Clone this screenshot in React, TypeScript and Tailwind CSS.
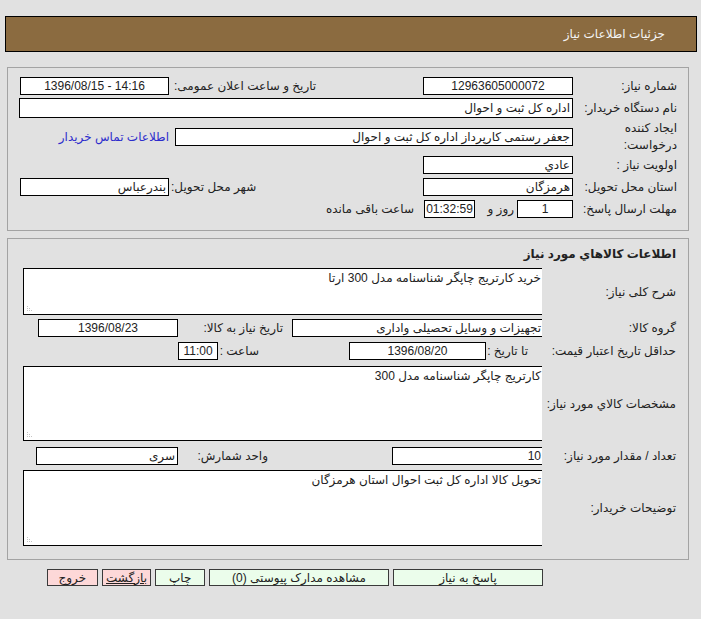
import type { ReactNode } from "react"

// text box with a black frame, as in the old ASP.NET forms
function Field({ className, children }: { className: string; children?: ReactNode }) {
  return (
    <div className={`flex shrink-0 items-center overflow-hidden whitespace-nowrap border-black bg-white leading-none ${className}`}>
      {children}
    </div>
  )
}

function Grip() {
  return (
    <svg className="absolute bottom-[2px] left-[3px]" width="6" height="6" viewBox="0 0 6 6">
      <g fill="#c4c4c4">
        <rect x="0" y="4" width="1" height="1" />
        <rect x="2" y="4" width="1" height="1" />
        <rect x="4" y="4" width="1" height="1" />
        <rect x="0" y="2" width="1" height="1" />
        <rect x="2" y="2" width="1" height="1" />
        <rect x="0" y="0" width="1" height="1" />
      </g>
    </svg>
  )
}

function Area({ h, text }: { h: string; text: string }) {
  return (
    <div className={`relative min-w-0 flex-1 border-y border-l border-black bg-white pr-[1px] pt-[2px] leading-[15px] ${h}`}>
      {text}
      <Grip />
    </div>
  )
}

export default function App() {
  return (
    <div
      dir="rtl"
      className="min-h-[619px] overflow-hidden bg-[#e1e1e1] pt-4 text-[12px] text-[#222] font-['Liberation_Sans','DejaVu_Sans',sans-serif]"
    >
      {/* Header */}
      <div className="mr-[4px] flex h-[36px] w-[692px] items-center border border-black bg-[#8b6b40] pr-[31px] text-[#f4f4f4]">
        جزئیات اطلاعات نیاز
      </div>

      {/* Need details */}
      <div className="mr-[12px] mt-[15px] h-[164px] w-[682px] border border-[#a3a3a3] pl-[11px] pr-[10px] pt-[7px]">
        <div className="flex h-[22px] items-center">
          <div className="w-[105px] shrink-0 pr-[1px]">شماره نیاز:</div>
          <div className="w-[252px] shrink-0">
            <Field className="h-[18px] w-[150px] justify-center border">12963605000072</Field>
          </div>
          <div className="w-[152px] shrink-0 pl-[5px] text-left">تاریخ و ساعت اعلان عمومی:</div>
          <Field className="h-[18px] w-[149px] justify-center border">
            <span dir="ltr">1396/08/15 - 14:16</span>
          </Field>
        </div>

        <div className="flex h-[22px] items-center">
          <div className="w-[105px] shrink-0 pr-[1px]">نام دستگاه خریدار:</div>
          <Field className="h-[20px] flex-1 border pr-[2px]">اداره کل ثبت و احوال</Field>
        </div>

        <div className="flex h-[35px] items-center">
          <div className="w-[105px] shrink-0 pr-[1px] leading-[17px]">
            ایجاد کننده
            <br />
            درخواست:
          </div>
          <Field className="h-[18px] w-[398px] border pr-[2px]">جعفر رستمی کارپرداز اداره کل ثبت و احوال</Field>
          <div className="flex-1 pr-[6px] text-[#2d2dcc]">اطلاعات تماس خریدار</div>
        </div>

        <div className="flex h-[22px] items-center">
          <div className="w-[105px] shrink-0 pr-[1px]">اولویت نیاز :</div>
          <Field className="h-[18px] w-[150px] border pr-[2px]">عادي</Field>
        </div>

        <div className="flex h-[22px] items-center">
          <div className="w-[105px] shrink-0 pr-[1px]">استان محل تحویل:</div>
          <div className="w-[252px] shrink-0">
            <Field className="h-[18px] w-[150px] border pr-[2px]">هرمزگان</Field>
          </div>
          <div className="w-[152px] shrink-0 pl-[2px] text-left">شهر محل تحویل:</div>
          <Field className="h-[18px] w-[149px] border pr-[2px]">بندرعباس</Field>
        </div>

        <div className="flex h-[22px] items-center">
          <div className="w-[105px] shrink-0 pr-[1px]">مهلت ارسال پاسخ:</div>
          <Field className="h-[18px] w-[56px] justify-center border">1</Field>
          <div className="w-[42px] shrink-0 pr-[3px]">روز و</div>
          <Field className="h-[18px] w-[51px] justify-center border">01:32:59</Field>
          <div className="mr-[10px]">ساعت باقی مانده</div>
        </div>
      </div>

      {/* Goods */}
      <div className="mr-[12px] mt-[7px] h-[322px] w-[682px] border border-[#a3a3a3] pl-[15px] pr-[10px]">
        <div className="flex h-[29px] items-center pr-[2px] font-bold">اطلاعات کالاهاي مورد نیاز</div>

        <div className="flex h-[47px] items-center">
          <div className="w-[136px] shrink-0 pr-[2px]">شرح کلی نیاز:</div>
          <Area h="h-[47px]" text="خرید کارتریج چاپگر شناسنامه مدل 300 ارتا" />
        </div>

        <div className="mt-[4px] flex h-[18px] items-center">
          <div className="w-[136px] shrink-0 pr-[2px]">گروه کالا:</div>
          <Field className="h-[18px] w-[250px] border-y border-l pr-[1px]">تجهیزات و وسایل تحصیلی واداری</Field>
          <div className="w-[114px] shrink-0 whitespace-nowrap pr-[9px]">تاریخ نیاز به کالا:</div>
          <Field className="h-[18px] w-[140px] justify-center border">1396/08/23</Field>
        </div>

        <div className="mt-[5px] flex h-[18px] items-center whitespace-nowrap">
          <div className="w-[143px] shrink-0 pr-[2px]">حداقل تاریخ اعتبار قیمت:</div>
          <div className="w-[49px] shrink-0 pr-[7px]">تا تاریخ :</div>
          <Field className="h-[18px] w-[137px] justify-center border">1396/08/20</Field>
          <div className="w-[131px] shrink-0 pr-[90px]">ساعت :</div>
          <Field className="h-[18px] w-[40px] justify-center border">11:00</Field>
        </div>

        <div className="mt-[6px] flex h-[75px] items-center">
          <div className="w-[136px] shrink-0 pr-[2px]">مشخصات کالاي مورد نیاز:</div>
          <Area h="h-[75px]" text="کارتریج چاپگر شناسنامه مدل 300" />
        </div>

        <div className="mt-[6px] flex h-[18px] items-center">
          <div className="w-[136px] shrink-0 pr-[2px]">تعداد / مقدار مورد نیاز:</div>
          <Field className="h-[18px] w-[150px] border-y border-l pr-[1px]">10</Field>
          <div className="w-[214px] shrink-0 pr-[124px]">واحد شمارش:</div>
          <Field className="h-[18px] w-[142px] border pr-[2px]">سری</Field>
        </div>

        <div className="mt-[5px] flex h-[76px] items-center">
          <div className="w-[136px] shrink-0 pr-[2px]">توضیحات خریدار:</div>
          <Area h="h-[76px]" text="تحویل کالا اداره کل ثبت احوال استان هرمزگان" />
        </div>
      </div>

      {/* Actions */}
      <div className="mr-[158px] mt-[9px] flex w-[496px] gap-[4px] leading-none">
        <button className="flex h-[17px] w-[151px] items-center justify-center border border-[#3a3a3a] bg-[#ebfdeb]">
          پاسخ به نیاز
        </button>
        <button className="flex h-[17px] w-[181px] items-center justify-center border border-[#3a3a3a] bg-[#ebfdeb]">
          مشاهده مدارک پیوستی (0)
        </button>
        <button className="flex h-[17px] w-[50px] items-center justify-center border border-[#3a3a3a] bg-[#ebfdeb]">
          چاپ
        </button>
        <button className="flex h-[17px] w-[50px] items-center justify-center border border-[#3a3a3a] bg-[#fdd8d8] underline">
          بازگشت
        </button>
        <button className="flex h-[17px] w-[51px] items-center justify-center border border-[#3a3a3a] bg-[#fdd8d8]">
          خروج
        </button>
      </div>
    </div>
  )
}
